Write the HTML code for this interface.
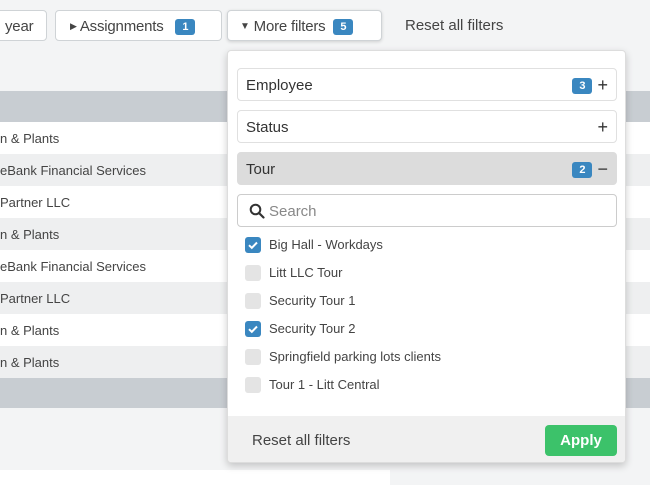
<!DOCTYPE html>
<html><head><style>
*{box-sizing:border-box;margin:0;padding:0}
body{width:650px;height:485px;background:#f3f4f5;font-family:"Liberation Sans",sans-serif;position:relative;overflow:hidden;color:#333}
.btn{position:absolute;top:10px;height:31px;background:#fff;border:1px solid #cfd3d6;border-radius:4px;font-size:15px;line-height:31px;color:#444;letter-spacing:-0.2px}
.badge{display:inline-block;background:#3a87c0;color:#fff;font-size:11px;font-weight:bold;border-radius:3px;width:20px;height:16px;line-height:16px;text-align:center;vertical-align:1px;letter-spacing:0}
.row{position:absolute;left:0;width:650px;height:32px;font-size:13px;line-height:33px;color:#444}
.pop{position:absolute;left:227px;top:50px;width:399px;height:413px;background:#fff;border:1px solid #ddd;border-radius:4px;box-shadow:0 3px 8px rgba(0,0,0,.2);overflow:hidden}
.sec{position:absolute;left:9px;width:380px;height:33px;border:1px solid #e0e0e0;border-radius:4px;font-size:15px;line-height:33px;padding-left:8px;color:#333}
.sec .r{position:absolute;right:8px;top:0;font-size:18px}
.item{position:absolute;left:17px;font-size:13px;color:#444;height:16px;line-height:16px}
.cb{display:inline-block;width:16px;height:16px;border-radius:3px;background:#e4e4e4;vertical-align:top;margin-right:8px}
.cb.on{background:#3a87c0}
</style></head><body>
<div class="btn" style="left:-10px;width:57px;padding-left:14px">year</div>
<div class="btn" style="left:55px;width:167px;padding-left:14px"><span style="font-size:9px;vertical-align:2px">▶</span> Assignments &nbsp;&nbsp;<span class="badge">1</span></div>
<div class="btn" style="left:227px;width:155px;padding-left:12px;box-shadow:0 1px 3px rgba(0,0,0,.15)"><span style="font-size:10px;vertical-align:2px">▼</span> More filters &nbsp;<span class="badge">5</span></div>
<div style="position:absolute;left:405px;top:10px;line-height:31px;font-size:15px;color:#444">Reset all filters</div>

<div class="row" style="top:91px;height:31px;background:#c8cdd2"></div>
<div class="row" style="top:122px;background:#fff">n &amp; Plants</div>
<div class="row" style="top:154px;background:#eeeff0">eBank Financial Services</div>
<div class="row" style="top:186px;background:#fff">Partner LLC</div>
<div class="row" style="top:218px;background:#eeeff0">n &amp; Plants</div>
<div class="row" style="top:250px;background:#fff">eBank Financial Services</div>
<div class="row" style="top:282px;background:#eeeff0">Partner LLC</div>
<div class="row" style="top:314px;background:#fff">n &amp; Plants</div>
<div class="row" style="top:346px;background:#eeeff0">n &amp; Plants</div>
<div class="row" style="top:378px;height:30px;background:#c8cdd2"></div>
<div style="position:absolute;left:0;top:470px;width:390px;height:15px;background:#fff"></div>

<div class="pop">
<div class="sec" style="top:17px">Employee<span class="r"><span class="badge" style="vertical-align:2px">3</span>&nbsp;+</span></div>
<div class="sec" style="top:59px">Status<span class="r">+</span></div>
<div class="sec" style="top:101px;background:#dcdcdc;border-color:#dcdcdc">Tour<span class="r"><span class="badge" style="vertical-align:2px">2</span>&nbsp;−</span></div>
<div class="sec" style="top:143px;border-color:#ccc;color:#888;padding-left:31px">Search
<svg style="position:absolute;left:11px;top:8px" width="16" height="16" viewBox="0 0 16 16"><circle cx="6.5" cy="6.5" r="4.8" fill="none" stroke="#333" stroke-width="2"/><path d="M10 10l4.5 4.5" stroke="#333" stroke-width="2.2" stroke-linecap="round"/></svg></div>
<div class="item" style="top:186px"><span class="cb on"><svg width="16" height="16" viewBox="0 0 16 16"><path d="M4 8.2l2.8 2.6L12 5.5" fill="none" stroke="#fff" stroke-width="2"/></svg></span>Big Hall - Workdays</div>
<div class="item" style="top:214px"><span class="cb"></span>Litt LLC Tour</div>
<div class="item" style="top:242px"><span class="cb"></span>Security Tour 1</div>
<div class="item" style="top:270px"><span class="cb on"><svg width="16" height="16" viewBox="0 0 16 16"><path d="M4 8.2l2.8 2.6L12 5.5" fill="none" stroke="#fff" stroke-width="2"/></svg></span>Security Tour 2</div>
<div class="item" style="top:298px"><span class="cb"></span>Springfield parking lots clients</div>
<div class="item" style="top:326px"><span class="cb"></span>Tour 1 - Litt Central</div>
<div style="position:absolute;left:0;top:365px;width:399px;height:48px;background:#f0f0f0">
<div style="position:absolute;left:24px;top:0;line-height:50px;font-size:15px;color:#444">Reset all filters</div>
<div style="position:absolute;left:317px;top:9px;width:72px;height:31px;background:#3cc26a;border-radius:4px;color:#fff;font-weight:bold;font-size:15px;line-height:31px;text-align:center">Apply</div>
</div>
</div>
</body></html>
